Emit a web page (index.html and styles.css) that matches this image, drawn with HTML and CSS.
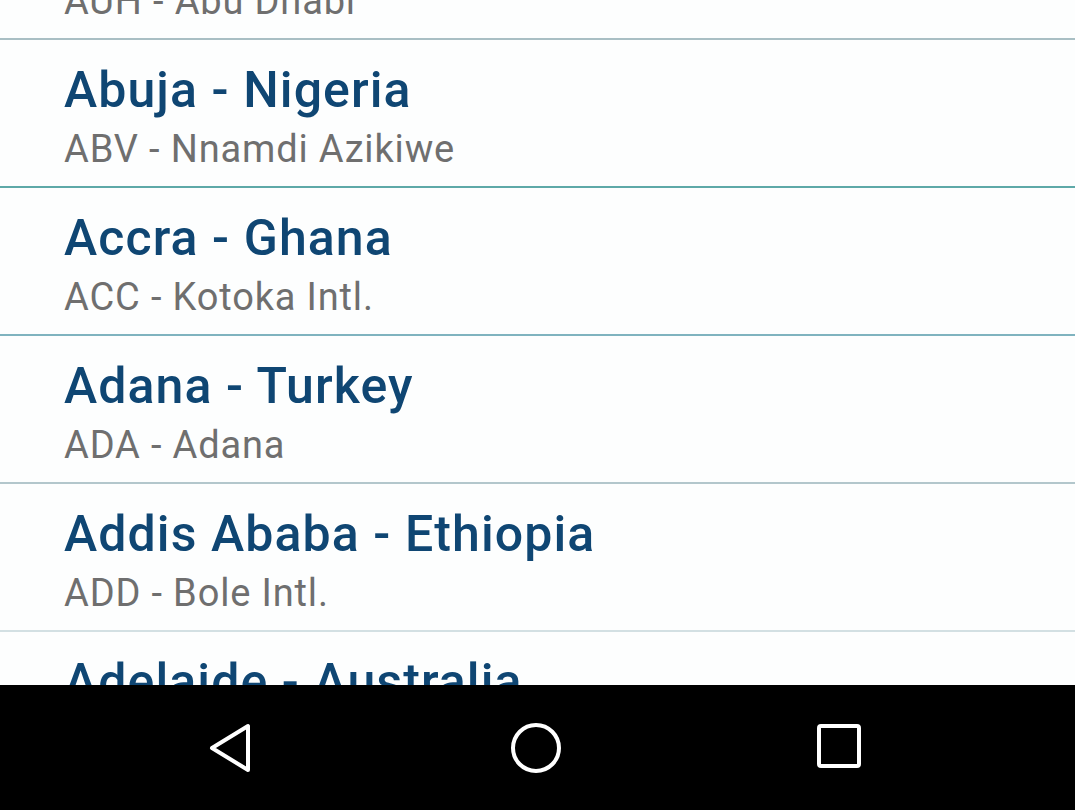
FILE: index.html
```html
<!DOCTYPE html>
<html>
<head>
<meta charset="utf-8">
<link rel="stylesheet" href="styles.css">
</head>
<body>
<div class="screen">
  <div class="list">
    <div class="items">
      <div class="item first d1">
        <div class="title">Abu Dhabi - UAE</div>
        <div class="sub">AUH - Abu Dhabi</div>
      </div>
      <div class="item d2">
        <div class="title">Abuja - Nigeria</div>
        <div class="sub">ABV - Nnamdi Azikiwe</div>
      </div>
      <div class="item d3">
        <div class="title">Accra - Ghana</div>
        <div class="sub">ACC - Kotoka Intl.</div>
      </div>
      <div class="item d4">
        <div class="title">Adana - Turkey</div>
        <div class="sub">ADA - Adana</div>
      </div>
      <div class="item d5">
        <div class="title">Addis Ababa - Ethiopia</div>
        <div class="sub">ADD - Bole Intl.</div>
      </div>
      <div class="item">
        <div class="title">Adelaide - Australia</div>
        <div class="sub">ADL - Adelaide</div>
      </div>
    </div>
  </div>
  <div class="navbar">
    <svg class="nav-icon" width="48" height="52" viewBox="0 0 48 52">
      <path d="M42 4 L42 48 L6 26 Z" fill="none" stroke="#fff" stroke-width="4" stroke-linejoin="round"/>
    </svg>
    <svg class="nav-icon" width="52" height="52" viewBox="0 0 52 52">
      <circle cx="26" cy="26" r="23" fill="none" stroke="#fff" stroke-width="4"/>
    </svg>
    <svg class="nav-icon square" width="44" height="44" viewBox="0 0 44 44">
      <rect x="2" y="2" width="40" height="40" rx="2" fill="none" stroke="#fff" stroke-width="4"/>
    </svg>
  </div>
</div>
</body>
</html>
```
FILE: styles.css
```css
html, body {
  margin: 0;
  padding: 0;
  background: #ffffff;
}
.screen {
  width: 1075px;
  height: 810px;
  display: flex;
  flex-direction: column;
  overflow: hidden;
}
.list {
  flex: 1;
  overflow: hidden;
  background: #fdfefe;
}
.items {
  margin-top: -108px;
}
.item {
  height: 146px;
  box-sizing: content-box;
  padding-left: 64px;
  border-bottom: 2px solid #a9bfc4;
  display: flex;
  flex-direction: column;
  font-family: Roboto, "Noto Sans", sans-serif;
}
.d2 { border-bottom-color: #5ea9a8; }
.d3 { border-bottom-color: #7fb3bf; }
.d4 { border-bottom-color: #b3c7cc; }
.d5 { border-bottom-color: #d3e0e3; }
.title {
  font-weight: 500;
  font-size: 50px;
  line-height: 56px;
  letter-spacing: 1.1px;
  margin-top: 22px;
  color: #0f4673;
  white-space: nowrap;
}
.sub {
  font-size: 38px;
  line-height: 44px;
  letter-spacing: 0.85px;
  margin-top: 9px;
  color: #6f6f6f;
  white-space: nowrap;
}
.navbar {
  height: 125px;
  flex: none;
  background: #000000;
  display: flex;
  align-items: center;
  justify-content: space-between;
  padding: 0 214px 0 206px;
}
.nav-icon {
  display: block;
}
.square {
  margin-top: -3px;
}
```
